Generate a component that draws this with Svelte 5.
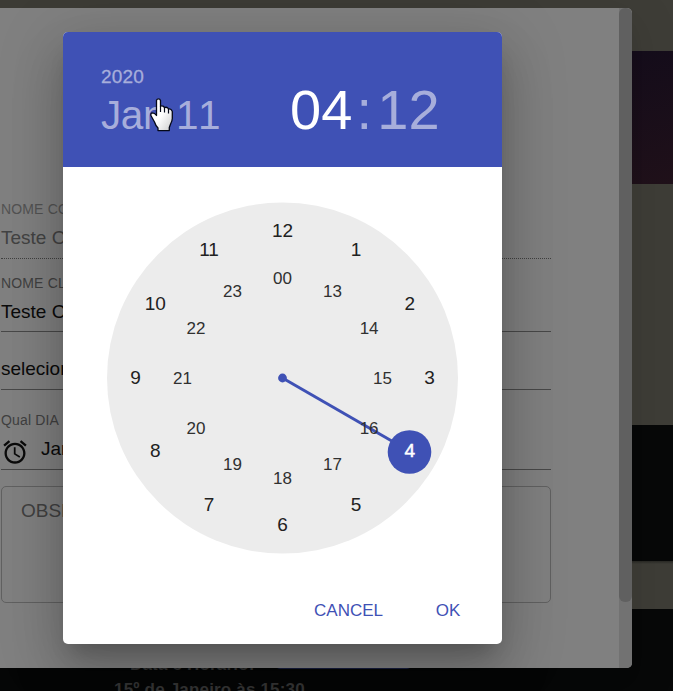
<script>
  const outer = [12, 1, 2, 3, 4, 5, 6, 7, 8, 9, 10, 11];
  const inner = ['00', 13, 14, 15, 16, 17, 18, 19, 20, 21, 22, 23];
  const selected = 4;

  function place(list, radius) {
    return list.map((label, i) => {
      const a = (i * Math.PI) / 6;
      return {
        label,
        x: Math.round((175.5 + radius * Math.sin(a)) * 10) / 10,
        y: Math.floor(175.01 - radius * Math.cos(a)) + 6
      };
    });
  }

  const outerMarks = place(outer, 147);
  const innerMarks = place(inner, 100);
</script>

<div class="screen">
  <div class="page">
    <div class="band plain top"></div>
    <div class="band hero"></div>
    <div class="band plain mid"></div>
    <div class="band dark card"></div>
    <div class="band plain gap"></div>
    <div class="band dark footer">
      <div class="footer-head"><b>Data e Horário:</b><span class="pill"></span></div>
      <b class="when">15º de Janeiro às 15:30</b>
    </div>
  </div>

  <section class="sheet">
    <form class="form">
      <div class="field disabled">
        <span class="label">NOME CO</span>
        <span class="value">Teste C</span>
      </div>
      <div class="field second">
        <span class="label">NOME CL</span>
        <span class="value">Teste C</span>
      </div>
      <div class="field select"><span class="value">selecion</span></div>
      <div class="field date">
        <span class="label">Qual DIA</span>
        <span class="value">
          <svg width="28" height="28" viewBox="0 0 24 24" fill="#0b0b0b"><path d="M22 5.72l-4.6-3.86-1.29 1.53 4.6 3.86L22 5.72zM7.88 3.39L6.6 1.86 2 5.71l1.29 1.53 4.59-3.85zM12.5 8H11v6l4.75 2.85.75-1.23-4-2.37V8zM12 4c-4.97 0-9 4.03-9 9s4.02 9 9 9c4.97 0 9-4.03 9-9s-4.03-9-9-9zm0 16c-3.87 0-7-3.13-7-7s3.13-7 7-7 7 3.13 7 7-3.13 7-7 7z" /></svg>
          <span>Jan</span>
        </span>
      </div>
      <div class="notes">OBSE</div>
    </form>
    <div class="track"><div class="thumb"></div></div>
  </section>

  <div class="dialog">
    <header>
      <div class="day">
        <span class="year">2020</span>
        <span class="month">Jan 11</span>
      </div>
      <div class="time"><span class="on">04</span><span class="colon">:</span><span>12</span></div>
    </header>
    <div class="clock">
      <svg width="351" height="351" viewBox="0 0 351 351">
        <circle cx="175.5" cy="175" r="175.5" fill="#ececec" />
        <line x1="175.5" y1="175" x2="290" y2="241" stroke="#3f51b5" stroke-width="3" />
        <circle cx="175.5" cy="175" r="4.4" fill="#3f51b5" />
        <circle cx="302.5" cy="249" r="21.8" fill="#3f51b5" />
        {#each outerMarks as m}
          <text class="outer" class:picked={m.label === selected} x={m.x} y={m.y}>{m.label}</text>
        {/each}
        {#each innerMarks as m}
          <text class="inner" x={m.x} y={m.y}>{m.label}</text>
        {/each}
      </svg>
    </div>
    <footer>
      <button>CANCEL</button>
      <button>OK</button>
    </footer>
  </div>

  <svg class="cursor" width="24" height="34" viewBox="0 0 24 34">
    <defs>
      <linearGradient id="hand" x1="0" y1="0" x2="1" y2="1">
        <stop offset=".5" stop-color="#fff" />
        <stop offset="1" stop-color="#ccc" />
      </linearGradient>
    </defs>
    <path d="M6.5 2.2Q7 .8 8.5 .8T10.5 2.5V8.2Q12 7.3 13.6 8.4L14.4 9.6Q16.5 8.8 17.8 10L18.4 11Q20.6 10.6 21.6 12.2L22.3 13.5V20.5Q22.2 23 20.6 26L19.3 29.5V32.6H8V30Q5.5 27.5 4.5 24L.9 17.5Q.6 15 2.3 14.8 4.6 14.8 6.5 17.5Z" fill="url(#hand)" stroke="#050818" stroke-width="1.3" stroke-linejoin="round" />
    <path d="M10.5 8V14M14.5 9.5V14.5M18.5 11V15.5" stroke="#050818" stroke-width="1.2" fill="none" />
  </svg>
</div>

<style>
  :global(body) { margin: 0; }
  .screen {
    position: relative;
    width: 673px;
    height: 691px;
    overflow: hidden;
    font-family: "Liberation Sans", Arial, sans-serif;
    background: #3e3d37;
  }
  .page { display: flex; flex-direction: column; height: 691px; }
  .plain { background: #3e3d37; }
  .dark { background: #070808; }
  .top { height: 51px; }
  .hero { height: 133px; background: linear-gradient(165deg, #0e0816 20%, #150d1b 55%, #20111a); }
  .mid { height: 241px; }
  .card { height: 136px; }
  .gap { height: 48px; background: linear-gradient(#282824, #3e3d37 3px); }
  .footer { height: 82px; color: #383838; font-size: 17px; line-height: 20px; letter-spacing: .18px; }
  .footer-head { display: flex; align-items: flex-start; padding: 46px 0 0 130px; height: 20px; }
  .pill { width: 137px; height: 14px; margin-left: 20px; border-radius: 5px; background: #1c2247; }
  .when { display: block; margin: 5px 0 0 114px; }

  .sheet {
    position: absolute;
    left: -20px;
    top: 8px;
    width: 652px;
    height: 660px;
    display: flex;
    justify-content: space-between;
    overflow: hidden;
    border-radius: 5px;
    background: #808080;
    box-shadow: 0 15px 20px -9px rgba(0, 0, 0, .1), 0 12px 50px 6px rgba(0, 0, 0, .08);
  }
  .form { width: 550px; padding: 192px 0 0 21px; }
  .field { display: flex; flex-direction: column; border-bottom: 1px solid #484848; color: #0b0b0b; }
  .label { font-size: 14px; line-height: 18px; letter-spacing: .15px; color: #404040; }
  .value { display: flex; align-items: center; font-size: 19px; line-height: 24px; }
  .disabled { height: 58px; border-bottom: 1px dotted #404040; }
  .disabled .label { color: #535353; }
  .disabled .value, .second .value { margin-top: 8px; }
  .disabled .value { color: #434343; }
  .second { height: 57px; padding-top: 15px; }
  .select { height: 32px; padding-top: 25px; }
  .date { height: 58px; padding-top: 21px; }
  .date .value { gap: 12px; margin-top: 8px; height: 24px; }
  .date svg { margin-top: 5px; }
  .notes {
    box-sizing: border-box;
    height: 117px;
    margin-top: 16px;
    padding: 11px 19px;
    border: 1px solid #616161;
    border-radius: 5px;
    font-size: 19px;
    line-height: 26px;
    color: #404040;
  }
  .track { width: 13px; background: #727272; }
  .thumb { height: 594px; border-radius: 6px; background: #606060; }

  .dialog {
    position: absolute;
    left: 63px;
    top: 32px;
    width: 439px;
    height: 612px;
    display: flex;
    flex-direction: column;
    overflow: hidden;
    border-radius: 5px;
    background: #fff;
    box-shadow: 0 15px 20px -9px rgba(0, 0, 0, .2), 0 32px 51px 4px rgba(0, 0, 0, .14), 0 12px 62px 11px rgba(0, 0, 0, .12);
  }
  header { box-sizing: border-box; display: flex; height: 135px; padding-left: 38px; background: #3f51b5; color: #a7aedb; }
  .day { display: flex; flex-direction: column; width: 189px; padding-top: 33px; }
  .year { font-size: 19px; line-height: 24px; letter-spacing: .2px; -webkit-text-stroke: .3px #a7aedb; }
  .month { font-size: 40.5px; line-height: 52px; letter-spacing: -.4px; font-kerning: none; white-space: nowrap; }
  .time { display: flex; font-size: 56px; line-height: 64px; padding-top: 46px; }
  .on { color: #fff; }
  .colon { width: 24px; margin-right: 1px; text-align: center; }
  .clock { display: flex; justify-content: center; margin-top: 36px; height: 351px; }
  .clock svg { overflow: visible; }
  .clock text { text-anchor: middle; fill: #212121; }
  .clock .outer { font-size: 19px; }
  .clock .inner { font-size: 17px; fill: #303030; }
  .clock .picked { fill: #fff; stroke: #fff; stroke-width: .5px; }
  footer { display: flex; justify-content: flex-end; gap: 11px; margin-top: 32px; padding-right: 11px; }
  button { height: 50px; min-width: 86px; padding: 0 11px; border: 0; background: none; color: #3f51b5; font: 17px "Liberation Sans", Arial, sans-serif; }
  .cursor { position: absolute; left: 150px; top: 98px; }
</style>
